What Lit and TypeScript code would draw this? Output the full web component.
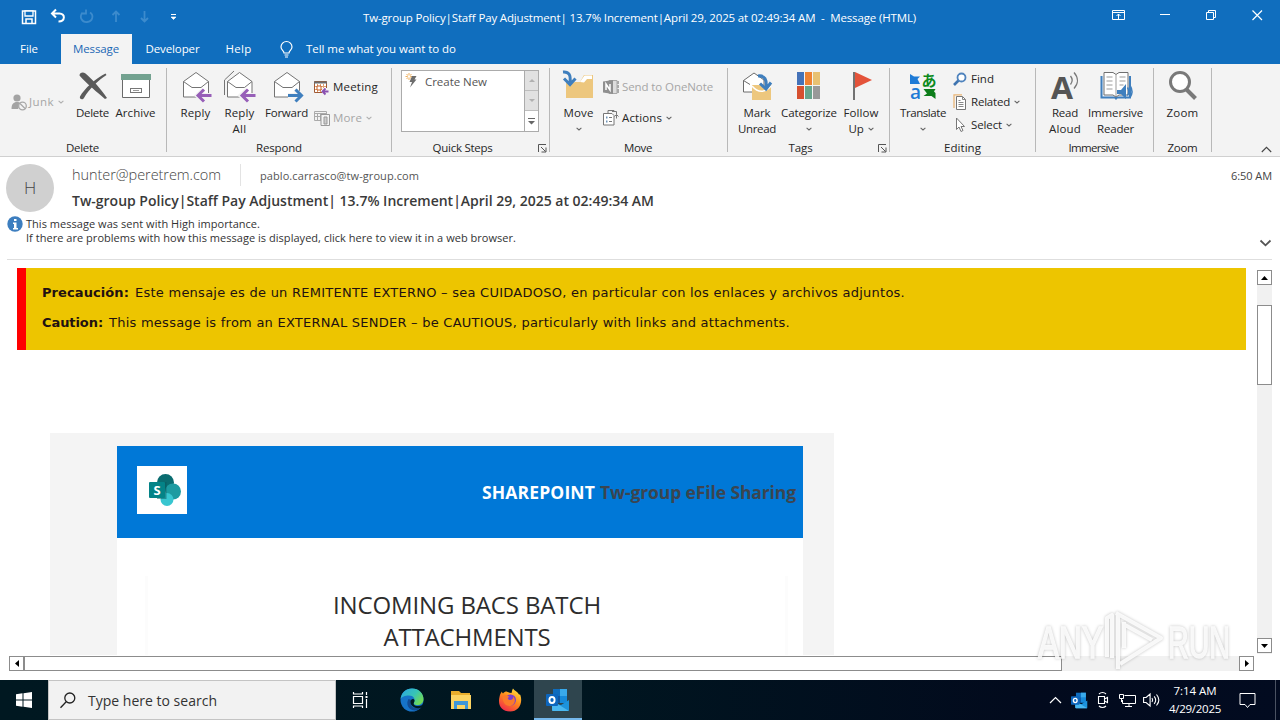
import {LitElement, TemplateResult, css, html} from 'lit';
import {customElement, property, query} from 'lit/decorators.js';

// Text run whose tracking is adjusted so that it fills exactly `w` pixels.
@customElement('fit-text')
export class FitText extends LitElement {
    static styles = css`
        :host {
            display: inline-block;
            white-space: pre;
            flex: none;
        }
    `;

    @property({type: String}) text = '';
    @property({type: Number}) w = 0;
    @query('span') span!: HTMLSpanElement;

    firstUpdated() {
        const natural = this.span.getBoundingClientRect().width;
        this.span.style.letterSpacing = `${(this.w - natural) / this.text.length}px`;
    }

    render() {
        return html`<span>${this.text}</span>`;
    }
}

const fit = (text: string, w: number) => html`<fit-text text=${text} w=${w}></fit-text>`;

const chevron = html`<svg class="chev" width="6" height="4" viewBox="0 0 6 4"><path d="M.6.8 3 3 5.4.8" fill="none" stroke="currentColor" stroke-width="1.1"/></svg>`;

const icons: Record<string, TemplateResult> = {
    delete: html`<svg width="32" height="32" viewBox="0 0 32 32"><path d="M2.500 5.500c0-3 3.500-4 6-2C14 8 24 19 30 28l-2 1C21 23 9 13 2.500 5.500Z" fill="#5a5a5a"/><path d="M29.500 5C22 9.500 12 19 7 28c-1.500 2.500-5 1-4-1.500C7 19 19 8 28.500 3.500Z" fill="#5a5a5a"/></svg>`,
    archive: html`<svg width="32" height="32" viewBox="0 0 32 32"><path d="M2.500 10V27.500h27V10" fill="#fff" stroke="#6a6a6a"/><rect x="1" y="4" width="30" height="6" fill="#73a290"/><rect x="10.500" y="18.500" width="11" height="4" fill="#fff" stroke="#777"/><path d="M13 20.500h6" stroke="#999"/></svg>`,
    reply: html`<svg width="32" height="32" viewBox="0 0 32 32"><path d="M3.500 11.500 16 2.500l12.500 9V27h-25Z" fill="#fff" stroke="#747474"/><path d="M3.500 11.500 12 17.500h9l7.500-6" fill="none" stroke="#747474"/><path d="M31 25.500H18.500M23.500 20l-6 5.500 6 5.500" fill="none" stroke="#f3f3f3" stroke-width="5"/><path d="M31.500 25.500H18.500M24 19.500l-6 6 6 6" fill="none" stroke="#975fb8" stroke-width="3"/></svg>`,
    replyAll: html`<svg width="34" height="32" viewBox="0 0 34 32"><path d="M1.500 25V10L11 1" fill="none" stroke="#747474"/><path d="M4.500 11.500 16.500 2.500l12.500 9V27h-24.500Z" fill="#fff" stroke="#747474"/><path d="M4.500 11.500 13 17.500h8.500l7.500-6" fill="none" stroke="#747474"/><path d="M31 25.500H18.500M24 20l-6 5.500 6 5.500" fill="none" stroke="#f3f3f3" stroke-width="5"/><path d="M32.500 25.500H19M25 19.500l-6 6 6 6" fill="none" stroke="#975fb8" stroke-width="3"/></svg>`,
    forward: html`<svg width="32" height="32" viewBox="0 0 32 32"><path d="M3.500 11.500 16 2.500l12.500 9V27h-25Z" fill="#fff" stroke="#747474"/><path d="M3.500 11.500 12 17.500h9l7.500-6" fill="none" stroke="#747474"/><path d="M17 25.500h12.500M24 20l6 5.500-6 5.500" fill="none" stroke="#f3f3f3" stroke-width="5"/><path d="M17 25.500h13M24.500 19.500l6 6-6 6" fill="none" stroke="#3f7fbe" stroke-width="3"/></svg>`,
    move: html`<svg width="32" height="32" viewBox="0 0 32 32"><path d="M3 12h14l4-7h9v23H3Z" fill="#edc77e"/><path d="M17 12l4.500-6.500H29V9h-5l-3 3.500Z" fill="#fff"/><path d="M1 2c6 0 8 3 7.500 10" fill="none" stroke="#f3f3f3" stroke-width="7"/><path d="M0 2c6-.5 8 3 7 11M1 8.500l6 6 5.500-6" fill="none" stroke="#3f7fbe" stroke-width="3"/></svg>`,
    markUnread: html`<svg width="32" height="32" viewBox="0 0 32 32"><path d="M2.500 22V10.500L13 3l10 7v12Z" fill="#fff" stroke="#6c6c6c"/><path d="M2.500 10.500 9 14.500" stroke="#6c6c6c"/><path d="M11 15h19v15H11Z" fill="#edc77e"/><path d="M11 16c6 7 13 7 19 0" fill="none" stroke="#fff" stroke-width="1.500"/><path d="M17 6c7-1 9 4 8 12M19 13.500l6 5.500 5-6.500" fill="none" stroke="#3f7fbe" stroke-width="3"/></svg>`,
    categorize: html`<svg width="32" height="32" viewBox="0 0 32 32"><path d="M4 2h7v13H4Z" fill="#4472b8"/><path d="M12 2h7v13h-7Z" fill="#ee8232"/><path d="M20 2h7v13h-7Z" fill="#e8c172"/><path d="M4 16h7v13H4Z" fill="#d6502f"/><path d="M12 16h7v13h-7Z" fill="#67a58c"/><path d="M20 16h7v13h-7Z" fill="#999"/></svg>`,
    followUp: html`<svg width="32" height="32" viewBox="0 0 32 32"><path d="M8 2h2v28H8Z" fill="#727272"/><path d="M10 2l17 8-17 8Z" fill="#e4533a"/></svg>`,
    translate: html`<svg class="translate" width="32" height="32" viewBox="0 0 32 32"><path d="M3 4l4 2.500h6L10.500 9l2.500 5H3Z" fill="#1d7ad6"/><path d="M16.500 19h12l-1.500 2.500 1.500 1.500v6l-4-3h-8l3.500-2.500Z" fill="#0c7d1a"/><text x="3" y="29" class="lat">a</text><text x="14.500" y="15.500" class="jp">あ</text></svg>`,
    readAloud: html`<svg class="aloud" width="32" height="32" viewBox="0 0 32 32"><text x="2" y="29" textLength="22" lengthAdjust="spacingAndGlyphs">A</text><path d="M21.500 6c2 2.500 2 6 0 8.500M25 2.500c4.500 5 4.500 11 0 16" fill="none" stroke="#777" stroke-width="1.300"/></svg>`,
    reader: html`<svg width="34" height="32" viewBox="0 0 34 32"><path d="M2.500 6v21.500H16l1 1 1-1h13V6" fill="#e8f1fa" stroke="#3f7fbe" stroke-width="2"/><path d="M5 2.500h9l3 2 3-2h9V25h-9l-3 2-3-2H5Z" fill="#fff" stroke="#707070"/><path d="M17 4.500V26M7.500 7h6M7.500 11h6M7.500 15h6M7.500 19h6M20.500 7h6M20.500 11h6M20.500 15h4" stroke="#9b9b9b"/><path d="M18 20h4l5-6v15l-5-5h-4Z" fill="#3f7fbe"/><path d="M28.500 17.500c1.500 2.500 1.500 5.500 0 8M31 15.500c2.500 4 2.500 8.500 0 12" fill="none" stroke="#3f7fbe" stroke-width="1.500"/></svg>`,
    zoom: html`<svg width="32" height="32" viewBox="0 0 32 32"><path d="M19.500 19.500 28.500 28.500" stroke="#797979" stroke-width="4"/><circle cx="13" cy="12" r="9.500" fill="#fff" stroke="#797979" stroke-width="3"/></svg>`,
    junk: html`<svg width="16" height="17" viewBox="0 0 16 17"><circle cx="6" cy="4" r="3.600" fill="#a3a3a3"/><path d="M.5 15c0-5 2-7 5.500-7 2 0 3 .5 4 1.500L7 15Z" fill="#a3a3a3"/><circle cx="11.500" cy="12" r="3.800" fill="#f3f3f3" stroke="#a8a8a8" stroke-width="1.300"/><path d="M9 9.500l5 5" stroke="#a8a8a8" stroke-width="1.300"/></svg>`,
    meeting: html`<svg width="16" height="16" viewBox="0 0 16 16"><path d="M.5 2.500h12v11H.5Z" fill="#fff" stroke="#a05a34"/><path d="M0 3.500h13" stroke="#6c6c6c" stroke-width="2"/><path d="M3.500 5v8M6.500 5v8M9.500 5v8M1 7.500h11M1 10.500h11" stroke="#e0a070"/><path d="M3 7h4v4H3Z" fill="#fff" stroke="#c55a20"/><path d="M8 9h8v7H8Z" fill="#f3f3f3"/><path d="M14.500 12.500H9M11.500 9.500l-3 3 3 3" fill="none" stroke="#8a50b0" stroke-width="1.800"/></svg>`,
    more: html`<svg width="16" height="16" viewBox="0 0 16 16"><path d="M.5 1.500h12v9H.5ZM.5 3.500h12M3.500 4v6M6.500 4v6M1 6.500h7" fill="none" stroke="#aaa"/><path d="M7 4.500h8.500v11H7Z" fill="#f3f3f3" stroke="#999"/><path d="M10 7h3v7h-3Z" fill="#ccc" stroke="#999"/></svg>`,
    onenote: html`<svg width="16" height="16" viewBox="0 0 16 16"><path d="M6 1.500h8v13H6Z" fill="#ddd" stroke="#a8a8a8"/><path d="M14 2h2v3h-2ZM14 6h2v3h-2ZM14 10h2v4h-2Z" fill="#aaa"/><path d="M0 2.500 10 1v14L0 13.500Z" fill="#8f8f8f"/><path d="M3 11V5l4 6V5" fill="none" stroke="#fff" stroke-width="1.500"/></svg>`,
    actions: html`<svg width="16" height="16" viewBox="0 0 16 16"><path d="M5 3V.5h6l1 1.500M9 1.500h4.500V4" fill="none" stroke="#777"/><path d="M.5 3.500h8.500l2 2v9.500H.5Z" fill="#fff" stroke="#777"/><path d="M3 7.500h1.500M3 11.500h1.500" stroke="#6f94b8" stroke-width="1.800"/><path d="M6 7.500h3M6 11.500h3" stroke="#777"/><path d="M13.500 8.500V4.500l-2 2M13.500 4.500l2 2" fill="none" stroke="#777"/></svg>`,
    find: html`<svg width="14" height="14" viewBox="0 0 14 14"><path d="M5.500 8.500 1 13" stroke="#3f74b0" stroke-width="2.600"/><circle cx="8.500" cy="5.500" r="4" fill="#fff" stroke="#4f83bd" stroke-width="1.800"/></svg>`,
    related: html`<svg width="14" height="16" viewBox="0 0 14 16"><path d="M1 14V.8h8" fill="none" stroke="#eab677" stroke-width="1.300"/><path d="M3.500 2.500h6l3 3v10h-9Z" fill="#fff" stroke="#777"/><path d="M9.500 2.500v3h3M5.500 6.500h2M5.500 8.500h5M5.500 10.500h5M5.500 12.500h5" fill="none" stroke="#888"/></svg>`,
    select: html`<svg width="14" height="16" viewBox="0 0 14 16"><path d="M3.500 1v11.500l2.500-2.500 2 4.500 2-1-2-4h3.500Z" fill="#fff" stroke="#777"/></svg>`,
    bolt: html`<svg width="14" height="16" viewBox="0 0 14 16"><path d="M4 0v7M.5 3.500h7M1.500 1l5 5M6.500 1l-5 5" stroke="#eda64a" stroke-width=".9"/><circle cx="4" cy="3.500" r="1.300" fill="#fff"/><path d="M7 3h4.500L9.500 6.500h2L5 14.500 7 9H4.500Z" fill="#6d6d6d"/></svg>`,
    launcher: html`<svg width="9" height="9" viewBox="0 0 9 9"><path d="M.5 8V.5H8" fill="none" stroke="#555"/><path d="M3 3l4.500 4.500M8 3.500V8H3.500" fill="none" stroke="#555"/></svg>`,
    outlook: html`<svg viewBox="0 0 24 24"><path d="M7 1h14v14H7Z" fill="#0f6cbd"/><path d="M14 1h7v7h-7Z" fill="#39a9ea"/><path d="M7 8h7v7H7Z" fill="#1056a0"/><path d="M14 8h7v7h-7Z" fill="#1689d9"/><path d="M6 22V15l9 2 8-5v10q0 1-1 1H7Z" fill="#1d93dc"/><path d="M10 15l13 8H7q-1 0-1-1v-4Z" fill="#4ab8f0"/><rect x="0" y="6" width="12" height="12" rx="1" fill="#0d66bd"/><ellipse cx="6" cy="12" rx="2.600" ry="3" fill="none" stroke="#fff" stroke-width="1.900"/></svg>`,
    edge: html`<svg width="24" height="24" viewBox="0 0 24 24"><defs><linearGradient id="e1" x1="0" y1="0" x2="1" y2=".6"><stop offset="0" stop-color="#2ba5e4"/><stop offset=".6" stop-color="#37c4b5"/><stop offset="1" stop-color="#70d957"/></linearGradient></defs><circle cx="12" cy="12" r="11.500" fill="#1673c8"/><path d="M.6 11C1.500 4.500 6 .5 12 .5 19 .5 23.500 5.500 23.500 11c0 4-3 6-6 6-3.500 0-4.500-1.500-3.500-3 1.800-3-.5-6.500-5-6.500C5 7.500 1.500 9 .6 11Z" fill="url(#e1)"/><path d="M8.500 11c-3 5 0 11 6 11.500 3 0 5.500-1.500 7-3.500-7 3-13-1-10-7Z" fill="#124b92"/><path d="M10.500 13.500c.3-2 2-3 3.500-2 1 1 .5 2 0 3-1 2 .5 3.500 4 3.500 2.500 0 4-.7 5-1.700l.7 1.700-2.200 1.500c-5 2-11.500-1-11-6Z" fill="#001821"/></svg>`,
    explorer: html`<svg width="22" height="20" viewBox="0 0 22 20"><path d="M1 1h8l2 2h9v15H1Z" fill="#e9ae2c"/><path d="M1 5h20v14H1Z" fill="#fcd462"/><path d="M4 11h14v8h-3v-4H7v4H4Z" fill="#3f97d8"/></svg>`,
    firefox: html`<svg width="24" height="24" viewBox="0 0 24 24"><defs><linearGradient id="f1" x1=".8" y1="0" x2=".2" y2="1"><stop offset="0" stop-color="#ffe23e"/><stop offset=".45" stop-color="#ff8a1c"/><stop offset="1" stop-color="#f0254f"/></linearGradient></defs><path d="M15 .5c1 2 5 3.500 6 6 1-0 1.500.5 1.500 1 2.500 8-2 16-10.500 16S-.5 17 1.500 9C2 6.500 2.500 5 4 3.500c0 1 .5 1.500 1 2C6 4 7.500 3.500 8.500 3.500c2 1 3.500 1.500 5 1.500C14 3.500 14 2 15 .5Z" fill="url(#f1)"/><circle cx="12.500" cy="12" r="5.500" fill="#7a3fd0"/><path d="M4.500 8.500c3-2.500 5.500-1 7 .5-3 .5-1.500 3 .5 3 2.500 0 3.500-1.500 3-3.500 3 2.500 2.500 8-2.500 9.500-5 .5-8-4-8-9.500Z" fill="#fb7a2b"/></svg>`,
};

interface BigButton {
    icon: string;
    w: number;
    lines: [string, number][];
    arrow?: 'below' | 'inline';
}

@customElement('app-root')
export class AppRoot extends LitElement {
    static styles = css`
        :host {
            display: flex;
            flex-direction: column;
            width: 1280px;
            height: 720px;
            overflow: hidden;
            position: relative;
            background: #fff;
            color: #262626;
            font: 11.5px/16px 'Open Sans', 'Noto Sans', sans-serif;
        }

        * {
            box-sizing: border-box;
        }

        svg {
            display: block;
            flex: none;
            overflow: visible;
        }

        .titlebar {
            height: 34px;
            background: #106ebe;
            color: #fff;
            display: grid;
            grid-template-columns: 363px 1fr auto;
            align-items: center;
        }

        .titlebar .caption {
            padding-top: 2px;
        }

        .tabs {
            height: 30px;
            background: #106ebe;
            color: #fff;
            display: flex;
            align-items: stretch;
        }

        .tab {
            display: flex;
            align-items: center;
            justify-content: center;
        }

        .tab.file { width: 61px; padding-right: 3px; }
        .tab.dev { width: 81px; }
        .tab.help { width: 50px; padding-left: 1px; }

        .tab.active {
            width: 71px;
            background: #f3f3f3;
            color: #1b68b5;
            padding-right: 1px;
        }

        .tell {
            display: flex;
            align-items: center;
            gap: 13px;
            padding-left: 17px;
        }

        .ribbon {
            height: 93px;
            background: #f3f3f3;
            border-bottom: 1px solid #d0d0d0;
            display: flex;
        }

        .group {
            display: flex;
            flex-direction: column;
            padding-top: 4px;
            flex: none;
        }

        .sep {
            width: 1px;
            height: 84px;
            margin-top: 4px;
            background: #b8b8b8;
            flex: none;
        }

        .tools {
            display: flex;
            height: 72px;
        }

        .name {
            height: 16px;
            display: grid;
            grid-template-columns: 1fr auto;
            align-items: center;
            text-align: center;
        }

        .g1 { width: 166px; }
        .g2 { width: 224px; }
        .g3 { width: 157px; }
        .g4 { width: 177px; }
        .g5 { width: 161px; }
        .g6 { width: 145px; }
        .g7 { width: 117px; }
        .g8 { width: 57px; }
        .g1 .tools { padding-left: 11px; }
        .g1 .name { padding-right: 1px; }
        .g2 .tools { padding-left: 7px; }
        .g3 .tools { padding: 2px 0 0 9px; }
        .g3 .name { padding-right: 2px; }
        .g3 .name fit-text, .g5 .name fit-text { margin-right: 5px; }
        .g4 .tools { padding-left: 10px; }
        .g4 .name { padding-right: 1px; }
        .g5 .tools { padding-left: 7px; }
        .g5 .name { padding-right: 2px; }
        .g6 .tools { padding-left: 8px; }
        .g7 .tools { padding-left: 7px; }
        .g7 .name { padding-right: 2px; }
        .g8 .tools { padding-left: 3px; }

        .big {
            display: flex;
            flex-direction: column;
            align-items: center;
            padding-top: 2px;
            flex: none;
        }

        .big .lines {
            display: flex;
            flex-direction: column;
            align-items: center;
            padding-top: 3px;
        }

        .line {
            height: 16px;
            display: flex;
            align-items: center;
            gap: 4px;
        }

        .chev {
            color: #666;
        }

        .small {
            display: flex;
            align-items: center;
            gap: 3px;
            height: 16px;
        }

        .small .chev {
            margin-left: 1px;
        }

        .dim {
            color: #a6a6a6;
        }

        .dim .chev {
            color: #b0b0b0;
        }

        .col {
            display: flex;
            flex-direction: column;
            padding: 11px 0 0 3px;
            gap: 15px;
        }

        .col.onenote { padding-left: 6px; }
        .col.tight { padding: 3px 0 0 5px; gap: 7px; }
        .col.tight .small { gap: 4px; }
        .col.tight .chev { margin-left: 0; }

        .junk {
            width: 60px;
            padding-top: 26px;
        }

        .junk .small { gap: 2px; }
        .junk .chev { margin-left: 2px; }

        .gallery {
            width: 138px;
            height: 62px;
            border: 1px solid #ababab;
            background: #fff;
            display: grid;
            grid-template-columns: 1fr 14px;
            color: #555;
        }

        .gallery .item {
            display: flex;
            gap: 6px;
            padding: 3px 0 0 3px;
            height: 19px;
        }

        .gallery .item svg {
            margin-top: -1px;
        }

        .spin {
            border-left: 1px solid #ababab;
            display: grid;
            grid-template-rows: 20px 20px 20px;
        }

        .spin div {
            display: flex;
            align-items: center;
            justify-content: center;
            background: #e1e1e1;
            border-bottom: 1px solid #bdbdbd;
        }

        .spin div:last-child {
            background: #fff;
            border: 0;
        }

        .translate .lat {
            font: 600 19px/1 'Open Sans', sans-serif;
            fill: #1d7ad6;
        }

        .translate .jp {
            font: 700 15px/1 'Noto Sans CJK JP', sans-serif;
            fill: #0c8a1c;
        }

        .aloud text {
            font: 700 30px/1 'Open Sans', sans-serif;
            fill: #555;
        }

        .collapse {
            margin-left: auto;
            padding: 82px 8px 0 0;
        }

        .head {
            height: 60px;
            display: grid;
            grid-template-columns: 72px 1fr auto;
            padding: 7px 8px 0 0;
            color: #444;
        }

        .avatar {
            width: 48px;
            height: 48px;
            margin-left: 6px;
            border-radius: 50%;
            background: #d0d0d0;
            display: flex;
            align-items: center;
            justify-content: center;
            font-size: 17px;
            font-weight: 300;
        }

        .from {
            height: 22px;
            display: flex;
            align-items: center;
            font-size: 14.5px;
            font-weight: 300;
        }

        .to {
            font-size: 11px;
            font-weight: 400;
            margin-left: 19px;
            padding: 3px 0 0 19px;
            border-left: 1px solid #e3e3e3;
            height: 22px;
            line-height: 18px;
            color: #555;
        }

        .subject {
            font-size: 14px;
            font-weight: 600;
            line-height: 20px;
            padding-top: 5px;
            color: #3a3a3a;
        }

        .time {
            font-size: 11px;
            padding-top: 4px;
        }

        .notice {
            height: 43px;
            margin: 0 8px 0 7px;
            display: grid;
            grid-template-columns: 19px 1fr auto;
            border-bottom: 1px solid #dedede;
            font-size: 11px;
            line-height: 14px;
            color: #333;
        }

        .notice p {
            margin: 0;
        }

        .notice .expand {
            padding-top: 22px;
        }

        .reading {
            height: 396px;
            display: grid;
            grid-template-columns: 1257px 15px;
            padding-top: 8px;
        }

        .mail {
            overflow: hidden;
        }

        .banner {
            margin-left: 17px;
            width: 1229px;
            height: 82px;
            background: #edc500;
            border-left: 9px solid #f00;
            padding: 10px 0 0 16px;
            font: 13px/30px 'DejaVu Sans', Verdana, sans-serif;
            color: #211;
        }

        .banner .row {
            display: flex;
            gap: 6px;
            height: 30px;
        }

        .sheet {
            margin: 83px 0 0 50px;
            width: 784px;
            height: 222px;
            background: #f4f4f4;
            padding: 13px 31px 0 67px;
        }

        .hero {
            height: 92px;
            background: #0078d7;
            display: flex;
            align-items: center;
            gap: 5px;
            padding: 0 7px 0 20px;
            font-size: 17.5px;
            font-weight: 700;
            color: #fff;
        }

        .logo {
            margin: 0 auto 4px 0;
            width: 50px;
            height: 48px;
            background: #fff;
        }

        .logo text {
            font: 700 13px/1 'Open Sans', sans-serif;
            fill: #fff;
        }

        .hero .muted {
            color: #3b4550;
        }

        .card {
            height: 117px;
            background: #fff;
            padding: 38px 15px 0 28px;
        }

        .card .inner {
            height: 79px;
            border: solid #fcfcfc;
            border-width: 0 3px;
            padding: 13px 0 0 1px;
            display: flex;
            flex-direction: column;
            align-items: center;
            font-size: 24px;
            font-weight: 500;
            line-height: 32px;
            color: #2d2d2d;
        }

        .vbar {
            margin-top: 2px;
            height: 384px;
            background: #f1f1f1;
            display: flex;
            flex-direction: column;
        }

        .vbar .thumb {
            height: 80px;
            margin: 20px 0 253px;
        }

        .btn, .thumb {
            background: #fff;
            border: 1px solid #8c8c8c;
            flex: none;
        }

        .btn {
            width: 15px;
            height: 15px;
            display: flex;
            align-items: center;
            justify-content: center;
        }

        .hbar {
            margin: 0 0 9px 9px;
            width: 1245px;
            height: 15px;
            background: #f1f1f1;
            display: flex;
        }

        .hbar .thumb {
            width: 1038px;
            margin-right: 177px;
        }

        .taskbar {
            height: 40px;
            background: linear-gradient(90deg, #001821, #001620 45%, #020a1d 80%, #020b20);
            display: flex;
            align-items: stretch;
            color: #fff;
        }

        .taskbar > div {
            display: flex;
            align-items: center;
            justify-content: center;
            flex: none;
        }

        .start { width: 48px; }
        .taskbar .app { width: 49px; }
        .taskbar .view { width: 51px; padding-right: 2px; }

        .taskbar .search {
            width: 288px;
            background: #f2f2f2;
            border: 1px solid #c4c4c4;
            color: #333;
            font-size: 14px;
            justify-content: flex-start;
            padding-left: 11px;
            gap: 12px;
        }

        .search fit-text { margin-top: 2px; }

        .taskbar .app.on {
            width: 48px;
            background: #2f454e;
            border-bottom: 2px solid #76b9ed;
        }

        .on svg { width: 24px; height: 24px; margin-top: 2px; }

        .taskbar .tray {
            margin-left: auto;
        }

        .tray > div {
            width: 24px;
            display: flex;
            justify-content: center;
        }

        .tray .mini svg { width: 17px; height: 17px; }

        .tray .clock {
            width: 64px;
            flex-direction: column;
            align-items: center;
            line-height: 18px;
        }

        .tray .action { width: 41px; }

        .tray .edge {
            width: 5px;
            height: 40px;
            margin-left: 7px;
            border-left: 1px solid #4a5262;
        }

        .watermark {
            position: absolute;
            left: 1034px;
            top: 604px;
            filter: drop-shadow(0 0 1.5px rgba(0, 0, 0, .28));
        }

        .watermark text {
            font: 400 45px/1 'Liberation Sans Narrow', 'Liberation Sans', sans-serif;
            fill: #fff;
            stroke: #fff;
            stroke-width: 1.5px;
            opacity: .85;
        }
    `;

    private button({icon, w, lines, arrow}: BigButton) {
        return html`
            <div class="big" style="width:${w}px">
                ${icons[icon]}
                <div class="lines">
                    ${lines.map(([text, width], i) => html`
                        <div class="line">${fit(text, width)}${arrow === 'inline' && i === lines.length - 1 ? chevron : ''}</div>`)}
                    ${arrow === 'below' ? html`<div class="line">${chevron}</div>` : ''}
                </div>
            </div>`;
    }

    private small(icon: string, text: string, w: number, arrow = false, dim = false) {
        return html`<div class="small ${dim ? 'dim' : ''}">${icons[icon]}${fit(text, w)}${arrow ? chevron : ''}</div>`;
    }

    private group(id: string, name: string, w: number, body: unknown, launcher = false) {
        return html`
            <div class="group ${id}">
                <div class="tools">${body}</div>
                <div class="name"><div>${fit(name, w)}</div>${launcher ? icons.launcher : ''}</div>
            </div>
            <div class="sep"></div>`;
    }

    private titlebar() {
        return html`
            <div class="titlebar">
                <svg width="190" height="34" viewBox="0 0 190 34" fill="none" stroke="#fff">
                    <path d="M22.500 11h13v12.500h-13Z" stroke-width="1.500"/><path d="M25 11h8v5h-8Z" fill="#106ebe" stroke-width="1.300"/><path d="M26 23v-4h6v4" stroke-width="1.500"/>
                    <path d="M56 9.500 52 13.500l4 4M52.500 13.500h7c6 0 6 8-1 8" stroke-width="2"/>
                    <g stroke="#3c8bcd" stroke-width="1.800"><path d="M82.500 12.500c-4 5 0 10 4.500 9.500 6-.5 7-7 3-9.500M86 9.500v4h-4"/><path d="M116 22V11.500M112.500 15 116 11.500l3.500 3.500M144.500 11v10.500M141 18l3.500 3.500 3.500-3.500"/></g>
                    <path d="M171 14.500h5"/><path d="M171 17h5l-2.500 2.500Z" fill="#fff" stroke-width=".6"/>
                </svg>
                <div class="caption">${fit('Tw-group Policy|Staff Pay Adjustment| 13.7% Increment|April 29, 2025 at 02:49:34 AM  -  Message (HTML)', 553)}</div>
                <svg width="180" height="34" viewBox="0 0 180 34" fill="none" stroke="#fff">
                    <path d="M12.500 10.500h12v9h-12ZM12.500 12.500h12M18.500 19v-5M16.500 16l2-2 2 2"/>
                    <path d="M60 14.500h10M106.500 12.500h7v7h-7ZM108.500 12v-1.500h7v7h-1.500"/>
                    <path d="M152.500 10.500l9.500 9.500M162 10.500l-9.500 9.500" stroke-width="1.200"/>
                </svg>
            </div>
            <div class="tabs">
                <div class="tab file">${fit('File', 18)}</div>
                <div class="tab active">${fit('Message', 46)}</div>
                <div class="tab dev">${fit('Developer', 54)}</div>
                <div class="tab help">${fit('Help', 26)}</div>
                <div class="tell">
                    <svg width="13" height="17" viewBox="0 0 13 17" fill="none" stroke="#fff" stroke-width="1.200"><path d="M4 12c0-2.500-3-3-3-6a5.500 5.500 0 0 1 11 0c0 3-3 3.500-3 6ZM4.500 14h4M5 16h3"/></svg>
                    ${fit('Tell me what you want to do', 150)}
                </div>
            </div>`;
    }

    private ribbon() {
        return html`
            <div class="ribbon">
                ${this.group('g1', 'Delete', 33, html`
                    <div class="junk">${this.small('junk', 'Junk', 25, true, true)}</div>
                    ${this.button({icon: 'delete', w: 43, lines: [['Delete', 33]]})}
                    ${this.button({icon: 'archive', w: 43, lines: [['Archive', 40]]})}`)}
                ${this.group('g2', 'Respond', 46, html`
                    ${this.button({icon: 'reply', w: 43, lines: [['Reply', 30]]})}
                    ${this.button({icon: 'replyAll', w: 45, lines: [['Reply', 30], ['All', 14]]})}
                    ${this.button({icon: 'forward', w: 49, lines: [['Forward', 43]]})}
                    <div class="col">
                        ${this.small('meeting', 'Meeting', 45)}
                        ${this.small('more', 'More', 29, true, true)}
                    </div>`)}
                ${this.group('g3', 'Quick Steps', 60, html`
                    <div class="gallery">
                        <div class="item">${icons.bolt}${fit('Create New', 62)}</div>
                        <div class="spin">
                            <div><svg width="6" height="3"><path d="M0 3 3 0l3 3Z" fill="#b0b0b0"/></svg></div>
                            <div><svg width="6" height="3"><path d="M0 0h6L3 3Z" fill="#b0b0b0"/></svg></div>
                            <div><svg width="7" height="7"><path d="M0 0h7v1H0ZM0 3h7L3.500 6.500Z" fill="#666"/></svg></div>
                        </div>
                    </div>`, true)}
                ${this.group('g4', 'Move', 28, html`
                    ${this.button({icon: 'move', w: 37, lines: [['Move', 30]], arrow: 'below'})}
                    <div class="col onenote">
                        ${this.small('onenote', 'Send to OneNote', 91, false, true)}
                        ${this.small('actions', 'Actions', 40, true)}
                    </div>`)}
                ${this.group('g5', 'Tags', 24, html`
                    ${this.button({icon: 'markUnread', w: 44, lines: [['Mark', 27], ['Unread', 38]]})}
                    ${this.button({icon: 'categorize', w: 60, lines: [['Categorize', 56]], arrow: 'below'})}
                    ${this.button({icon: 'followUp', w: 44, lines: [['Follow', 35], ['Up', 15]], arrow: 'inline'})}`, true)}
                ${this.group('g6', 'Editing', 37, html`
                    ${this.button({icon: 'translate', w: 50, lines: [['Translate', 46]], arrow: 'below'})}
                    <div class="col tight">
                        ${this.small('find', 'Find', 23)}
                        ${this.small('related', 'Related', 39, true)}
                        ${this.small('select', 'Select', 31, true)}
                    </div>`)}
                ${this.group('g7', 'Immersive', 50, html`
                    ${this.button({icon: 'readAloud', w: 44, lines: [['Read', 26], ['Aloud', 32]]})}
                    ${this.button({icon: 'reader', w: 57, lines: [['Immersive', 55], ['Reader', 37]]})}`)}
                ${this.group('g8', 'Zoom', 30, this.button({icon: 'zoom', w: 51, lines: [['Zoom', 32]]}))}
                <div class="collapse">
                    <svg width="11" height="7" viewBox="0 0 11 7"><path d="M.8 6 5.500 1.300 10.200 6" fill="none" stroke="#444" stroke-width="1.100"/></svg>
                </div>
            </div>`;
    }

    private header() {
        return html`
            <div class="head">
                <div class="avatar">H</div>
                <div>
                    <div class="from">${fit('hunter@peretrem.com', 149)}
                        <div class="to">${fit('pablo.carrasco@tw-group.com', 159)}</div>
                    </div>
                    <div class="subject">${fit('Tw-group Policy|Staff Pay Adjustment| 13.7% Increment|April 29, 2025 at 02:49:34 AM', 582)}</div>
                </div>
                <div class="time">${fit('6:50 AM', 41)}</div>
            </div>
            <div class="notice">
                <svg width="16" height="16" viewBox="0 0 16 16"><circle cx="8" cy="7" r="7.700" fill="#3d7ebf"/><path d="M7 2h2.500v2H7ZM6 5.500h3.500V11H11v1.500H6V11h1V7H6Z" fill="#fff"/></svg>
                <div>
                    <p>${fit('This message was sent with High importance.', 234)}</p>
                    <p>${fit('If there are problems with how this message is displayed, click here to view it in a web browser.', 490)}</p>
                </div>
                <div class="expand"><svg width="13" height="8" viewBox="0 0 13 8"><path d="M1.500 1.500 6.500 6.300l5-4.800" fill="none" stroke="#555" stroke-width="1.800"/></svg></div>
            </div>`;
    }

    private reading() {
        return html`
            <div class="reading">
                <div class="mail">
                    <div class="banner">
                        <div class="row"><b>${fit('Precaución:', 87)}</b>${fit('Este mensaje es de un REMITENTE EXTERNO – sea CUIDADOSO, en particular con los enlaces y archivos adjuntos.', 770)}</div>
                        <div class="row"><b>${fit('Caution:', 61)}</b>${fit('This message is from an EXTERNAL SENDER – be CAUTIOUS, particularly with links and attachments.', 681)}</div>
                    </div>
                    <div class="sheet">
                        <div class="hero">
                            <svg class="logo" viewBox="0 0 50 48">
                                <circle cx="28.500" cy="16.500" r="8.500" fill="#0a6c70"/><circle cx="36" cy="25.500" r="8" fill="#1d9ba1"/><circle cx="30" cy="33.500" r="6.500" fill="#38c6d0"/>
                                <path d="M20 16h9.500v17H20Z" fill="#07565b" opacity=".5"/><rect x="12" y="16" width="16" height="16" rx="1" fill="#048387"/><text x="16.500" y="28.800">S</text>
                            </svg>
                            ${fit('SHAREPOINT', 113)}
                            <span class="muted">${fit('Tw-group eFile Sharing', 196)}</span>
                        </div>
                        <div class="card">
                            <div class="inner">${fit('INCOMING BACS BATCH', 268)}${fit('ATTACHMENTS', 167)}</div>
                        </div>
                    </div>
                </div>
                <div class="vbar">
                    <div class="btn"><svg width="7" height="4"><path d="M0 4 3.500 0 7 4Z"/></svg></div>
                    <div class="thumb"></div>
                    <div class="btn"><svg width="7" height="4"><path d="M0 0h7L3.500 4Z"/></svg></div>
                </div>
            </div>
            <div class="hbar">
                <div class="btn"><svg width="4" height="7"><path d="M4 0v7L0 3.500Z"/></svg></div>
                <div class="thumb"></div>
                <div class="btn"><svg width="4" height="7"><path d="M0 0v7l4-3.500Z"/></svg></div>
            </div>
            <svg class="watermark" width="204" height="72" viewBox="0 0 204 72">
                <text x="4" y="54" textLength="65" lengthAdjust="spacingAndGlyphs">ANY</text>
                <text x="134" y="54" textLength="62" lengthAdjust="spacingAndGlyphs">RUN</text>
                <path d="M73 53V14l5-3v43M82 9l45 25-41 26M84 65V11M90 18v26M91 21l27 15" fill="none" stroke="#fff" stroke-opacity=".85" stroke-width="4" stroke-linejoin="round"/>
            </svg>`;
    }

    private taskbar() {
        return html`
            <div class="taskbar">
                <div class="start"><svg width="16" height="16" viewBox="0 0 16 16" fill="#fff"><path d="M0 2.200 6.500 1.300V7.500H0ZM7.500 1.200 16 0v7.500H7.500ZM0 8.500h6.500v6.200L0 13.800ZM7.500 8.500H16V16l-8.500-1.200Z"/></svg></div>
                <div class="search">
                    <svg width="16" height="17" viewBox="0 0 16 17" fill="none" stroke="#222" stroke-width="1.300"><circle cx="9.800" cy="6" r="5"/><path d="M6.200 9.700.5 15.800"/></svg>
                    ${fit('Type here to search', 129)}
                </div>
                <div class="view"><svg width="18" height="16" viewBox="0 0 18 16" fill="none" stroke="#fff" stroke-width="1.200"><path d="M1.500 4.500h9v7h-9ZM1.500 0v2h9V0M1.500 16v-2h9v2M14.500 0v3M14.500 7v9"/><path d="M13.500 4h2v2h-2Z" fill="#fff" stroke="none"/></svg></div>
                <div class="app">${icons.edge}</div>
                <div class="app">${icons.explorer}</div>
                <div class="app">${icons.firefox}</div>
                <div class="app on">${icons.outlook}</div>
                <div class="tray">
                    <div><svg width="13" height="8" viewBox="0 0 13 8" fill="none" stroke="#fff" stroke-width="1.200"><path d="M1 7l5.500-5.500L12 7"/></svg></div>
                    <div class="mini">${icons.outlook}</div>
                    <div><svg width="14" height="18" viewBox="0 0 14 18" fill="none" stroke="#fff" stroke-width="1.100"><path d="M2.500 5.500h6v7h-6ZM8.500 8l3-1.500v5l-3-1.500M3 3c2-2 5-2 7 0M3 15c2 2 5 2 7 0"/></svg></div>
                    <div><svg width="17" height="15" viewBox="0 0 17 15" fill="none" stroke="#fff"><path d="M5.500 2.500h11v8H3.500V7M10 10.500v3M6 13.500h7M.5 1.500h4v4h-4ZM2.500 5.500V9"/></svg></div>
                    <div><svg width="17" height="14" viewBox="0 0 17 14" fill="none" stroke="#fff" stroke-width="1.100"><path d="M.6 4.500h2.500l4-3.500v12l-4-3.500H.6ZM9 5c1 1.500 1 2.500 0 4M11.200 3.300c2 2.500 2 5 0 7.500M13.500 1.500c3 3.500 3 7.500 0 11"/></svg></div>
                    <div class="clock">${fit('7:14 AM', 43)}${fit('4/29/2025', 52)}</div>
                    <div class="action"><svg width="17" height="17" viewBox="0 0 17 17" fill="none" stroke="#fff"><path d="M1 1.500h15v11h-5l-2.500 3-2.500-3H1Z"/></svg></div>
                    <div class="edge"></div>
                </div>
            </div>`;
    }

    render() {
        return html`${this.titlebar()}${this.ribbon()}${this.header()}${this.reading()}${this.taskbar()}`;
    }
}
